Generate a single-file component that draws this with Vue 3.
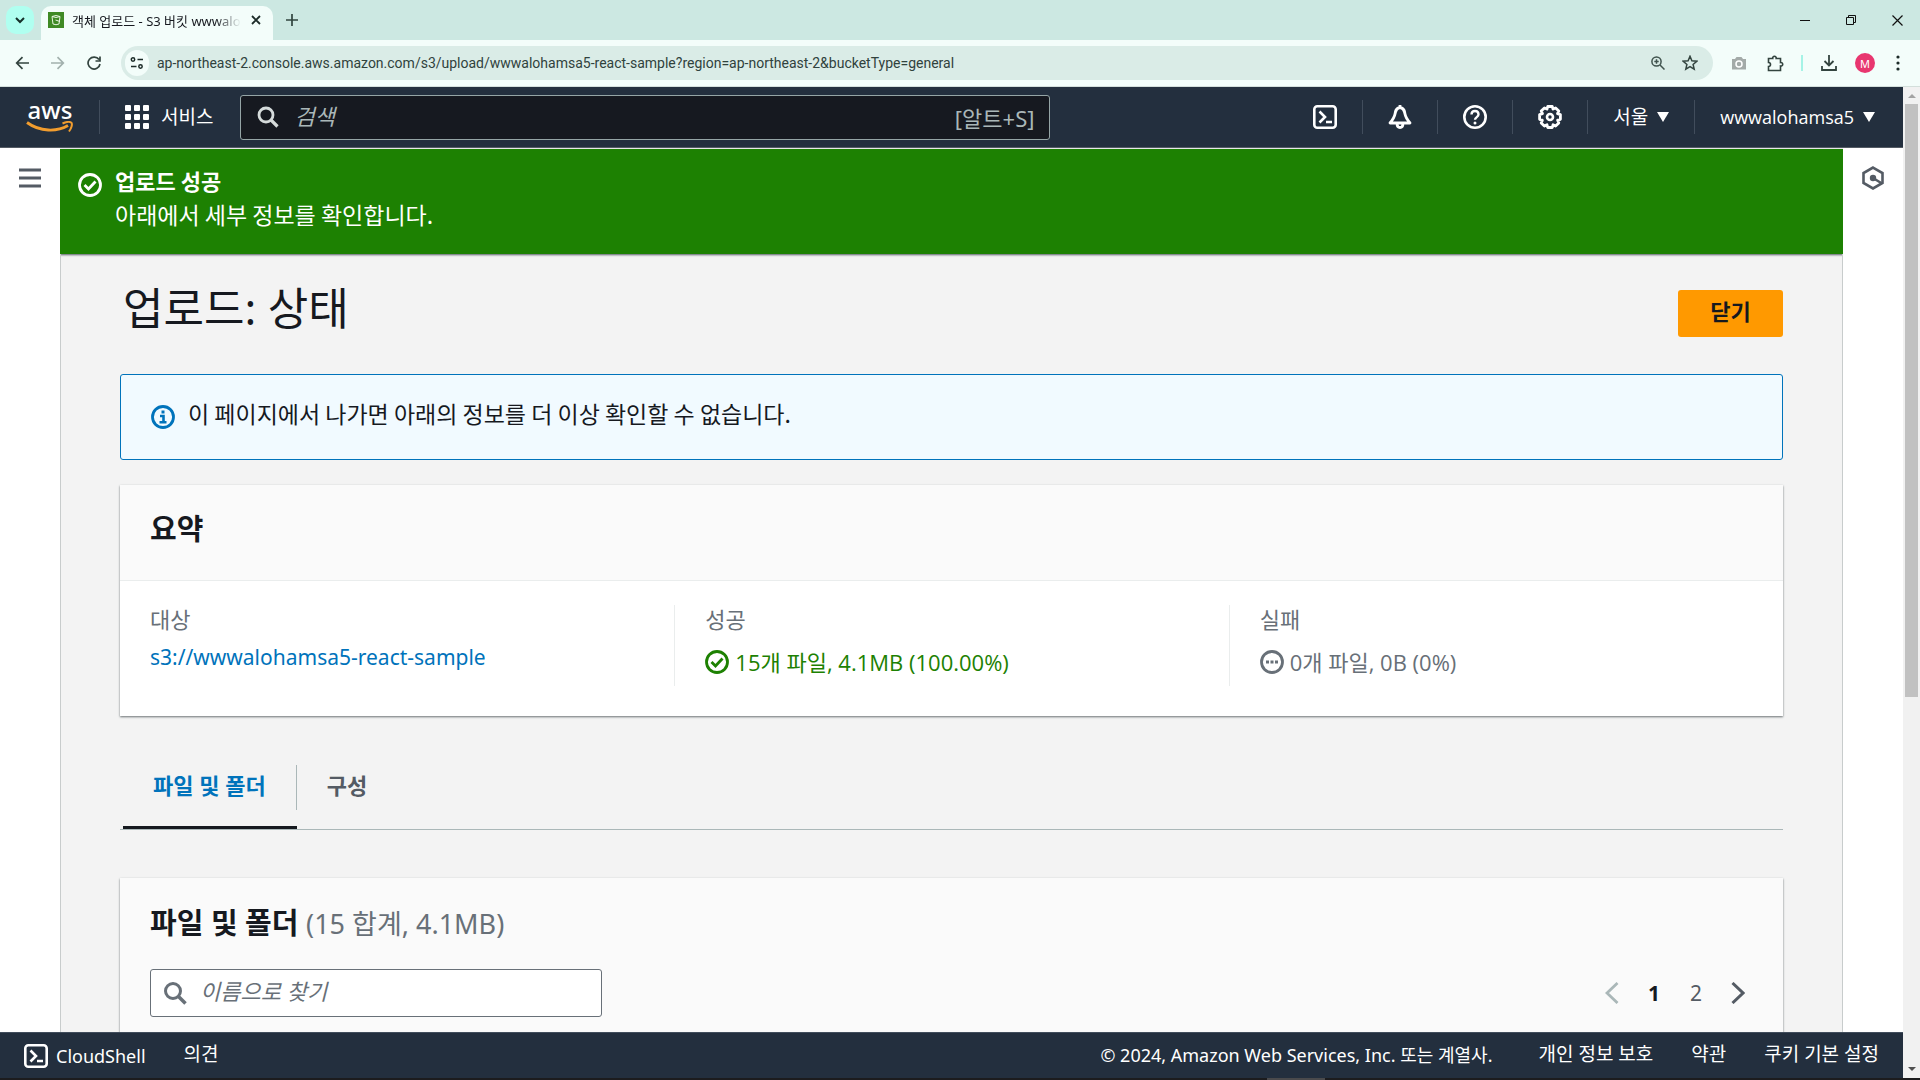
<template>
  <div class="browser">
    <header class="tab-strip">
      <button class="tab-search" aria-label="탭 검색">
        <svg width="10" height="7" viewBox="0 0 10 7"><path d="M1 1l4 4 4-4" fill="none" stroke="#16302a" stroke-width="2" /></svg>
      </button>
      <div class="tab">
        <svg class="favicon" width="16" height="16" viewBox="0 0 16 16">
          <rect width="16" height="16" fill="#3f8a25" />
          <path d="M4 4.500q4-2 8 0l-1 7.500q-3 1.500-6 0zM4 4.500q4 2 8 0M7.500 8l4.500 1.500" fill="none" stroke="#e9f6e2" />
        </svg>
        <span class="tab-title">객체 업로드 - S3 버킷 wwwalo</span>
        <button class="tab-close" aria-label="탭 닫기">
          <svg width="10" height="10" viewBox="0 0 10 10"><path d="M1 1l8 8M9 1l-8 8" stroke="#1c2b28" stroke-width="1.800" /></svg>
        </button>
      </div>
      <button class="new-tab" aria-label="새 탭">
        <svg width="12" height="12" viewBox="0 0 12 12"><path d="M6 0v12M0 6h12" stroke="#30443f" stroke-width="1.700" /></svg>
      </button>
      <div class="window-controls">
        <button aria-label="최소화"><svg width="10" height="10" viewBox="0 0 10 10"><path d="M0 5.500h10" stroke="#111" /></svg></button>
        <button aria-label="이전 크기로"><svg width="10" height="10" viewBox="0 0 10 10"><path d="M.5 2.500h7v7h-7zM2.500 2.500v-2h7v7h-2" fill="none" stroke="#111" /></svg></button>
        <button aria-label="닫기"><svg width="11" height="11" viewBox="0 0 11 11"><path d="M.5.5l10 10M10.500.5l-10 10" stroke="#111" stroke-width="1.200" /></svg></button>
      </div>
    </header>

    <div class="toolbar">
      <button aria-label="뒤로"><svg width="14" height="14" viewBox="0 0 14 14"><path d="M14 7H2M7.500 1.200L1.700 7l5.800 5.800" fill="none" stroke="#33443f" stroke-width="1.700" /></svg></button>
      <button aria-label="앞으로"><svg width="14" height="14" viewBox="0 0 14 14"><path d="M0 7h12M6.500 1.200L12.300 7l-5.800 5.800" fill="none" stroke="#a2b1ad" stroke-width="1.700" /></svg></button>
      <button aria-label="새로고침"><svg width="14" height="14" viewBox="0 0 14 14"><path d="M12 3.600A6 6 0 1 0 13 8M13 .5v4.500H8.500" fill="none" stroke="#33443f" stroke-width="1.700" /></svg></button>
      <div class="address">
        <span class="site-info">
          <svg width="14" height="12" viewBox="0 0 14 12"><path d="M7.500 2.500H13M1 9.500h5.500" stroke="#1c2b28" stroke-width="1.700" /><circle cx="3" cy="2.500" r="1.700" fill="none" stroke="#1c2b28" stroke-width="1.500" /><circle cx="10.500" cy="9.500" r="1.700" fill="none" stroke="#1c2b28" stroke-width="1.500" /></svg>
        </span>
        <input v-model="url" type="text" aria-label="주소창">
        <button aria-label="확대/축소"><svg width="14" height="14" viewBox="0 0 14 14"><circle cx="5.500" cy="5.500" r="4.600" fill="none" stroke="#40534e" stroke-width="1.500" /><path d="M9 9l4.500 4.500M3.300 5.500h4.400M5.500 3.300v4.400" stroke="#40534e" stroke-width="1.500" /></svg></button>
        <button aria-label="북마크"><svg width="16" height="16" viewBox="0 0 16 16"><path d="M8 1.300l1.900 4.500 4.900.4-3.700 3.200 1.100 4.800L8 11.700l-4.200 2.500 1.100-4.800L1.200 6.200l4.900-.4z" fill="none" stroke="#33443f" stroke-width="1.500" /></svg></button>
      </div>
      <div class="extensions">
        <button aria-label="캡처"><svg width="14" height="14" viewBox="0 0 14 14"><path d="M0 3h3l1.500-2h5L11 3h3v10.500H0z" fill="#a3aaa8" /><circle cx="7" cy="8" r="3" fill="#a3aaa8" stroke="#fff" stroke-width="1.500" /></svg></button>
        <button aria-label="확장 프로그램"><svg width="17" height="17" viewBox="0 0 17 17"><path d="M1.500 3.500h4.200a1.800 1.800 0 1 1 3.500 0h4.300v4a1.800 1.800 0 1 1 0 3.500v4.500h-12v-4a2 2 0 0 0 0-4z" fill="none" stroke="#33443f" stroke-width="1.600" /></svg></button>
        <span class="ext-divider"></span>
        <button aria-label="다운로드"><svg width="16" height="16" viewBox="0 0 16 16"><path d="M8 0v10M3.500 6L8 10.500 12.500 6M1 11v4h14v-4" fill="none" stroke="#33443f" stroke-width="1.800" /></svg></button>
        <button class="avatar" aria-label="프로필">M</button>
        <button aria-label="메뉴"><svg width="4" height="16" viewBox="0 0 4 16" fill="#1c2b28"><circle cx="2" cy="2" r="1.600" /><circle cx="2" cy="8" r="1.600" /><circle cx="2" cy="14" r="1.600" /></svg></button>
      </div>
    </div>

    <div class="viewport">
      <div class="console">
        <nav class="aws-nav">
          <a class="aws-logo" href="#" aria-label="AWS">
            <span>aws</span>
            <svg width="48" height="13" viewBox="0 0 48 13"><path d="M1 1.500C14 11 31 11 42 4.500" fill="none" stroke="#f29d2e" stroke-width="2.800" /><path d="M36.500 2.500c4-1.800 7.500-2 9-.7 1 1.500 0 5.500-2.500 8.700" fill="none" stroke="#f29d2e" stroke-width="2" /></svg>
          </a>
          <span class="nav-divider"></span>
          <button class="services">
            <svg width="24" height="24" viewBox="0 0 24 24" fill="#fff">
              <rect v-for="n in 9" :key="n" :x="((n - 1) % 3) * 9" :y="Math.floor((n - 1) / 3) * 9" width="6" height="6" rx="1" />
            </svg>
            <span>서비스</span>
          </button>
          <label class="nav-search">
            <svg width="22" height="22" viewBox="0 0 22 22"><circle cx="9" cy="9" r="7" fill="none" stroke="#d5dbdb" stroke-width="2.800" /><path d="M14 14l6.500 6.500" stroke="#d5dbdb" stroke-width="3.200" /></svg>
            <input v-model="query" type="search" placeholder="검색" aria-label="검색">
            <span>[알트+S]</span>
          </label>
          <div class="nav-tools">
            <button aria-label="CloudShell">
              <svg width="24" height="24" viewBox="0 0 24 24"><rect x="1.300" y="1.300" width="21.400" height="21.400" rx="3" fill="none" stroke="#fff" stroke-width="2.600" /><path d="M6.500 6.500L12 12l-5.500 5.500M13 17h6" fill="none" stroke="#fff" stroke-width="2.600" /></svg>
            </button>
            <button aria-label="알림">
              <svg width="24" height="24" viewBox="0 0 24 24"><path d="M12 2.500C8 3 7.500 6 7 9c-.6 3.500-2.500 6-5 9h20c-2.500-3-4.400-5.500-5-9-.5-3-1-6-5-6.500zM12 0v3M9 18c0 6 6 6 6 0" fill="none" stroke="#fff" stroke-width="2.800" stroke-linejoin="round" /></svg>
            </button>
            <button aria-label="도움말">
              <svg width="24" height="24" viewBox="0 0 24 24"><circle cx="12" cy="12" r="10.700" fill="none" stroke="#fff" stroke-width="2.600" /><path d="M8.500 9.500c0-4.700 7-4.700 7 0 0 2.700-3.500 2.500-3.500 5.300" fill="none" stroke="#fff" stroke-width="2.400" /><circle cx="12" cy="18" r="1.500" fill="#fff" /></svg>
            </button>
            <button aria-label="설정">
              <svg width="24" height="24" viewBox="0 0 24 24"><path d="M9.700 1.500h4.600l.7 2.600 2.600-1.200 3.200 3.200-1.300 2.600 2.900.9v4.700l-2.800.9 1.200 2.700-3.200 3.200-2.600-1.300-.7 2.700H9.700L9 19.800l-2.600 1.300-3.200-3.200 1.200-2.700-2.800-.9V9.600l2.900-.9-1.300-2.600 3.200-3.200L9 4.100z" fill="none" stroke="#fff" stroke-width="2.800" stroke-linejoin="round" /><circle cx="12" cy="12" r="3" fill="none" stroke="#fff" stroke-width="2.600" /></svg>
            </button>
            <button><span>서울</span> <i class="caret"></i></button>
            <button class="account">wwwalohamsa5 <i class="caret"></i></button>
          </div>
        </nav>

        <div class="body">
          <aside class="rail">
            <button aria-label="탐색 열기"><svg width="22" height="20" viewBox="0 0 22 20"><path d="M0 2h22M0 10h22M0 18h22" stroke="#545b64" stroke-width="3" /></svg></button>
          </aside>

          <main>
            <section class="flash" role="status">
              <svg width="24" height="24" viewBox="0 0 24 24"><circle cx="12" cy="12" r="10.500" fill="none" stroke="#fff" stroke-width="2.800" /><path d="M6.500 12l4 4 7-7.500" fill="none" stroke="#fff" stroke-width="2.800" /></svg>
              <div>
                <strong>업로드 성공</strong>
                <p>아래에서 세부 정보를 확인합니다.</p>
              </div>
            </section>

            <div class="content">
              <div class="page-head">
                <h1>업로드: 상태</h1>
                <button class="primary">닫기</button>
              </div>

              <div class="alert">
                <svg width="24" height="24" viewBox="0 0 24 24"><circle cx="12" cy="12" r="10.500" fill="none" stroke="#0073bb" stroke-width="2.800" /><path d="M9 11h3.500v6.500M8.500 17.300h7" fill="none" stroke="#0073bb" stroke-width="2.600" /><path d="M10.500 5.500h3v3h-3z" fill="#0073bb" /></svg>
                <p>이 페이지에서 나가면 아래의 정보를 더 이상 확인할 수 없습니다.</p>
              </div>

              <section class="card summary">
                <h2>요약</h2>
                <dl>
                  <div>
                    <dt>대상</dt>
                    <dd><a href="#">s3://wwwalohamsa5-react-sample</a></dd>
                  </div>
                  <div>
                    <dt>성공</dt>
                    <dd class="status success">
                      <svg width="24" height="24" viewBox="0 0 24 24"><circle cx="12" cy="12" r="10.500" fill="none" stroke="currentColor" stroke-width="2.800" /><path d="M6.500 12l4 4 7-7.500" fill="none" stroke="currentColor" stroke-width="2.800" /></svg>
                      15개 파일, 4.1MB (100.00%)
                    </dd>
                  </div>
                  <div>
                    <dt>실패</dt>
                    <dd class="status">
                      <svg width="24" height="24" viewBox="0 0 24 24"><circle cx="12" cy="12" r="10.500" fill="none" stroke="currentColor" stroke-width="2.800" /><path d="M6 10.500h3v3H6zM10.500 10.500h3v3h-3zM15 10.500h3v3h-3z" fill="currentColor" /></svg>
                      0개 파일, 0B (0%)
                    </dd>
                  </div>
                </dl>
              </section>

              <div class="tabs" role="tablist">
                <button
                  v-for="tab in tabs"
                  :key="tab"
                  role="tab"
                  :aria-selected="tab === activeTab"
                  :class="{ active: tab === activeTab }"
                  @click="activeTab = tab"
                ><span>{{ tab }}</span></button>
              </div>

              <section class="card files">
                <h2>파일 및 폴더 <span>(15 합계, 4.1MB)</span></h2>
                <div class="files-tools">
                  <label class="filter">
                    <svg width="24" height="24" viewBox="0 0 24 24"><circle cx="10" cy="10" r="7.500" fill="none" stroke="#687078" stroke-width="3" /><path d="M15.500 15.500l7 7" stroke="#687078" stroke-width="3.500" /></svg>
                    <input v-model="filter" type="search" placeholder="이름으로 찾기" aria-label="이름으로 찾기">
                  </label>
                  <div class="pagination">
                    <button aria-label="이전 페이지" disabled><svg width="14" height="22" viewBox="0 0 14 22"><path d="M12.500 1L2 11l10.500 10" fill="none" stroke="#aab7b8" stroke-width="2.800" /></svg></button>
                    <button
                      v-for="n in 2"
                      :key="n"
                      :class="{ current: n === page }"
                      @click="page = n"
                    >{{ n }}</button>
                    <button aria-label="다음 페이지"><svg width="14" height="22" viewBox="0 0 14 22"><path d="M1.500 1L12 11 1.500 21" fill="none" stroke="#545b64" stroke-width="3" /></svg></button>
                  </div>
                </div>
              </section>
            </div>
          </main>

          <aside class="rail">
            <button aria-label="도움말 패널"><svg width="22" height="24" viewBox="0 0 22 24"><path d="M11 1.600l9.500 5.400v10L11 22.400 1.500 17V7z" fill="none" stroke="#545b64" stroke-width="2.600" /><circle cx="11" cy="12" r="3.200" fill="#545b64" /><path d="M11 12l9 5.500" stroke="#545b64" stroke-width="2.600" /></svg></button>
          </aside>
        </div>

        <footer>
          <a class="shell" href="#">
            <svg width="24" height="24" viewBox="0 0 24 24"><rect x="1.300" y="1.300" width="21.400" height="21.400" rx="3" fill="none" stroke="#fff" stroke-width="2.600" /><path d="M6.500 6.500L12 12l-5.500 5.500M13 17h6" fill="none" stroke="#fff" stroke-width="2.600" /></svg>
            CloudShell
          </a>
          <a class="link" href="#">의견</a>
          <span class="copyright">© 2024, Amazon Web Services, Inc. 또는 계열사.</span>
          <a class="link" href="#">개인 정보 보호</a>
          <a class="link" href="#">약관</a>
          <a class="link" href="#">쿠키 기본 설정</a>
        </footer>
      </div>

      <div class="scrollbar">
        <i class="arrow up"></i>
        <div class="track"><div class="thumb"></div></div>
        <i class="arrow down"></i>
      </div>
    </div>
    <div class="taskbar"></div>
  </div>
</template>

<script setup>
import { ref } from 'vue'

const url = ref('ap-northeast-2.console.aws.amazon.com/s3/upload/wwwalohamsa5-react-sample?region=ap-northeast-2&bucketType=general')
const query = ref('')
const filter = ref('')
const page = ref(1)

const tabs = ['파일 및 폴더', '구성']
const activeTab = ref(tabs[0])
</script>

<style>
body {
  margin: 0;
  overflow: hidden;
}
</style>

<style scoped>
* {
  box-sizing: border-box;
}

.browser {
  display: flex;
  flex-direction: column;
  height: 100vh;
  font-family: "Noto Sans", "Noto Sans CJK KR", sans-serif;
  font-size: 21px;
  color: #16191f;
}

button {
  display: flex;
  align-items: center;
  justify-content: center;
  padding: 0;
  border: 0;
  background: none;
  font: inherit;
  color: inherit;
}

input {
  min-width: 0;
  padding: 0;
  border: 0;
  outline: 0;
  background: none;
  font: inherit;
  color: inherit;
}

a {
  color: inherit;
  text-decoration: none;
}

svg {
  flex: none;
}

h1, h2, p, dl, dd {
  margin: 0;
}

/* browser chrome */
.tab-strip {
  display: flex;
  flex: none;
  height: 40px;
  padding: 6px 0 0 6px;
  background: #cce8e2;
}

.tab-search {
  width: 28px;
  height: 28px;
  border-radius: 10px;
  background: #b0fff0;
}

.tab {
  display: flex;
  align-items: center;
  width: 232px;
  margin-left: 7px;
  padding: 0 12px 6px 7px;
  border-radius: 10px 10px 0 0;
  background: #f3fdfa;
  font-size: 13px;
}

.tab-title {
  margin: 0 auto 0 8px;
  white-space: nowrap;
  mask-image: linear-gradient(to right, #000 85%, transparent);
}

.new-tab {
  width: 28px;
  height: 28px;
  margin-left: 5px;
}

.window-controls {
  display: flex;
  margin-left: auto;
}

.window-controls button {
  width: 46px;
  height: 28px;
}

.toolbar {
  display: flex;
  flex: none;
  align-items: center;
  height: 47px;
  padding: 0 7px 0 4px;
  border-bottom: 1px solid #d3dfdb;
  background: #f3fdfa;
}

.toolbar > button {
  width: 36px;
  height: 34px;
}

.address {
  display: flex;
  flex: 1;
  align-items: center;
  height: 34px;
  margin-left: 9px;
  padding: 0 7px 0 4px;
  border-radius: 17px;
  background: #daece7;
}

.address input {
  flex: 1;
  margin-left: 8px;
  font-family: Roboto, sans-serif;
  font-size: 14px;
  color: #30423d;
}

.address button {
  width: 32px;
  height: 32px;
}

.site-info {
  display: flex;
  align-items: center;
  justify-content: center;
  width: 24px;
  height: 26px;
  border-radius: 13px;
  background: #f3fdfa;
}

.extensions {
  display: flex;
  align-items: center;
  margin-left: 8px;
}

.extensions button {
  width: 36px;
  height: 32px;
}

.extensions button:last-child {
  width: 30px;
}

.ext-divider {
  width: 2px;
  height: 16px;
  margin: 0 8px;
  background: #a5f3e6;
}

.extensions .avatar {
  width: 20px;
  height: 20px;
  margin: 0 8px;
  border-radius: 50%;
  background: #e8366f;
  font-size: 11px;
  color: #fff;
}

/* console */
.viewport {
  display: flex;
  flex: 1;
  min-height: 0;
}

.console {
  display: flex;
  flex: 1;
  flex-direction: column;
  min-width: 0;
}

.aws-nav {
  display: flex;
  flex: none;
  align-items: center;
  height: 61px;
  padding: 0 28px 0 26px;
  border-bottom: 1px solid #545b64;
  background: #232f3e;
  font-size: 19px;
  color: #fff;
}

.aws-logo {
  display: flex;
  flex-direction: column;
  align-items: center;
  width: 48px;
  font-family: "Noto Sans", sans-serif;
  font-size: 24px;
  font-weight: 500;
  line-height: 18px;
}

.aws-logo span {
  height: 20px;
}

.nav-divider {
  width: 1px;
  height: 34px;
  margin: 0 25px;
  background: #414d5c;
}

.services {
  gap: 12px;
}

.nav-tools span,
.services span {
  padding-bottom: 2px;
}

.nav-search {
  display: flex;
  align-items: center;
  width: 810px;
  height: 45px;
  margin-left: 27px;
  padding: 0 15px 0 16px;
  border: 1px solid #95a5a6;
  border-radius: 3px;
  background: #161920;
  font-size: 22px;
  color: #aab7b8;
}

.nav-search input {
  flex: 1;
  margin-left: 15px;
  padding-bottom: 2px;
}

input::placeholder {
  font-style: italic;
  color: inherit;
  opacity: 1;
}

.nav-tools {
  display: flex;
  margin-left: auto;
}

.nav-tools button {
  gap: 9px;
  height: 34px;
  padding: 0 25px;
}

.nav-tools button + button {
  border-left: 1px solid #414d5c;
}

.nav-tools .account {
  padding-right: 0;
  font-family: "Open Sans", sans-serif;
  font-size: 18px;
}

.caret {
  border: 6px solid transparent;
  border-top: 10px solid #fff;
  border-bottom: 0;
}

.body {
  display: flex;
  flex: 1;
  min-height: 0;
}

.rail {
  display: flex;
  flex: none;
  align-items: flex-start;
  justify-content: center;
  width: 60px;
  padding-top: 18px;
  background: #fff;
}

.rail button {
  height: 24px;
}

main {
  flex: 1;
  min-width: 0;
  overflow: hidden;
  padding-top: 1px;
  background: #f3f3f3;
}

.flash {
  display: flex;
  gap: 13px;
  height: 105px;
  padding: 14px 18px;
  background: #1d8102;
  box-shadow: 0 1px 2px #545b64;
  font-family: "Noto Sans CJK KR", sans-serif;
  font-size: 22px;
  line-height: 34px;
  color: #fff;
}

.flash svg {
  margin-top: 10px;
}

.flash p {
  font-size: 23px;
}

.content {
  padding: 36px 59px;
  border: solid #c8cccc;
  border-width: 0 1px;
}

.page-head {
  display: flex;
  align-items: flex-start;
  justify-content: space-between;
  height: 84px;
}

h1 {
  padding-left: 3px;
  font-size: 44px;
  font-weight: 400;
  line-height: 36px;
}

.primary {
  width: 105px;
  height: 47px;
  padding-bottom: 8px;
  border-radius: 3px;
  background: #f90;
  font-size: 22px;
  font-weight: 700;
}

.alert {
  display: flex;
  gap: 13px;
  align-items: center;
  height: 86px;
  padding: 0 30px;
  border: 1px solid #0073bb;
  border-radius: 3px;
  background: #f1faff;
  font-family: "Noto Sans CJK KR", sans-serif;
  font-size: 23px;
}

.alert p {
  padding-bottom: 8px;
}

.card {
  background: #fff;
  box-shadow: 0 1px 2px #6b7274;
}

.card h2 {
  font-size: 29px;
  line-height: 34px;
}

.summary {
  margin-top: 25px;
}

.summary h2 {
  height: 96px;
  padding: 27px 30px;
  border-bottom: 1px solid #eaeded;
  background: #fafafa;
}

.summary dl {
  display: grid;
  grid-template-columns: repeat(3, 1fr);
  padding: 24px 0 30px;
}

.summary dl > div {
  height: 81px;
  padding-left: 30px;
  line-height: 30px;
}

.summary dl > div + div {
  border-left: 1px solid #eaeded;
}

.summary dt {
  line-height: 28px;
  font-size: 22px;
  color: #687078;
}

.summary dd {
  margin-top: 9px;
}

.summary a {
  color: #0073bb;
}

.status {
  display: flex;
  gap: 6px;
  align-items: center;
  padding-top: 5px;
  font-family: "Open Sans", "Noto Sans CJK KR", sans-serif;
  font-size: 22px;
  color: #687078;
}

.success {
  color: #1d8102;
}

.tabs {
  display: flex;
  height: 80px;
  margin-top: 34px;
  padding-left: 3px;
  border-bottom: 1px solid #aab7b8;
}

.tabs button {
  align-items: flex-start;
  height: 79px;
  padding-top: 15px;
  font-size: 22px;
  font-weight: 700;
  color: #545b64;
}

.tabs span {
  height: 45px;
  padding: 0 30px;
  line-height: 40px;
}

.tabs button:first-child span {
  border-right: 1px solid #aab7b8;
}

.tabs .active {
  border-bottom: 3px solid #16191f;
  color: #0073bb;
}

.files {
  height: 400px;
  margin-top: 48px;
  padding: 28px 30px;
  background: #fafafa;
}

.files h2 {
  height: 34px;
}

.files h2 span {
  font-size: 27px;
  font-weight: 400;
  color: #687078;
}

.files-tools {
  display: flex;
  align-items: center;
  justify-content: space-between;
  margin-top: 29px;
}

.filter {
  display: flex;
  gap: 13px;
  align-items: center;
  width: 452px;
  height: 48px;
  padding: 0 12px;
  border: 1px solid #687078;
  border-radius: 3px;
  background: #fff;
  font-size: 22px;
  color: #687078;
}

.filter input {
  flex: 1;
  padding-bottom: 4px;
}

.pagination {
  display: flex;
  margin-right: -6px;
}

.pagination button {
  width: 42px;
  height: 48px;
  color: #545b64;
}

.pagination .current {
  font-weight: 700;
  color: #16191f;
}

footer {
  display: flex;
  flex: none;
  align-items: center;
  gap: 38px;
  height: 46px;
  padding: 0 24px;
  border-top: 1px solid #414d5c;
  background: #232f3e;
  font-size: 18px;
  color: #fff;
}

.shell {
  display: flex;
  gap: 8px;
  align-items: center;
}

.link {
  padding-bottom: 5px;
  font-size: 19px;
}

.copyright {
  margin: 0 8px 0 auto;
  padding-bottom: 4px;
}

/* page scrollbar */
.scrollbar {
  display: flex;
  flex: none;
  flex-direction: column;
  align-items: center;
  justify-content: space-between;
  width: 17px;
  padding: 7px 0;
  background: #f1f1f1;
}

.track {
  flex: 1;
  width: 13px;
  padding: 6px 0;
}

.thumb {
  height: 62%;
  background: #c1c1c1;
}

.arrow {
  border: 4px solid transparent;
}

.up {
  border-top: 0;
  border-bottom-color: #a3a3a3;
}

.down {
  border-bottom: 0;
  border-top-color: #505050;
}

.taskbar {
  flex: none;
  height: 2px;
  background: linear-gradient(to right, #1c1c1e 66%, #4a4a4c 66%, #4a4a4c 69%, #1c1c1e 69%);
}
</style>
